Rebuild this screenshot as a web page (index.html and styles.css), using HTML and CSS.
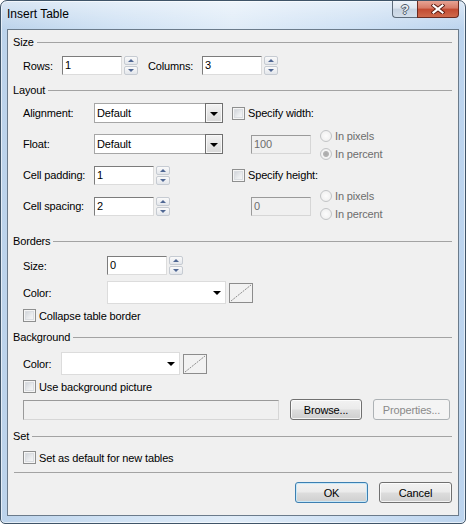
FILE: index.html
```html
<!DOCTYPE html>
<html>
<head>
<meta charset="utf-8">
<title>Insert Table</title>
<link rel="stylesheet" href="styles.css">
</head>
<body>
<div class="window">
  <div class="titlebar">
    <span class="title">Insert Table</span>
    <div class="caption">
      <div class="cap-btn cap-help"><span>?</span></div>
      <div class="cap-btn cap-close">
        <svg width="14" height="10" viewBox="0 0 14 10"><path d="M2.5 1.5 L11.5 8.5 M11.5 1.5 L2.5 8.5" stroke="#5a1a10" stroke-width="4" stroke-linecap="square" fill="none"/><path d="M2.5 1.5 L11.5 8.5 M11.5 1.5 L2.5 8.5" stroke="#ffffff" stroke-width="2.2" stroke-linecap="square" fill="none"/></svg>
      </div>
    </div>
  </div>
  <div class="client">
    <div class="ghead"><span>Size</span></div>
    <div class="row row-size">
      <span class="lbl w-rows">Rows:</span>
      <div class="spin"><div class="tb">1</div><div class="spinbtns"><span class="sb"><i class="up"></i></span><span class="sb"><i class="down"></i></span></div></div>
      <span class="lbl w-cols">Columns:</span>
      <div class="spin"><div class="tb">3</div><div class="spinbtns"><span class="sb"><i class="up"></i></span><span class="sb"><i class="down"></i></span></div></div>
    </div>

    <div class="ghead g-layout"><span>Layout</span></div>
    <div class="lgrid">
      <span class="lbl">Alignment:</span>
      <div class="combo"><span>Default</span><span class="dd"><i></i></span></div>
      <div class="rc"><span class="cb"></span><span class="cbtext">Specify width:</span></div>

      <span class="lbl">Float:</span>
      <div class="combo"><span>Default</span><span class="dd"><i></i></span></div>
      <div class="rc rc-sub"><div class="tb dis">100</div>
        <div class="radios"><div class="ropt"><span class="rd"></span><span>In pixels</span></div><div class="ropt"><span class="rd on"></span><span>In percent</span></div></div>
      </div>

      <span class="lbl">Cell padding:</span>
      <div class="spin"><div class="tb">1</div><div class="spinbtns"><span class="sb"><i class="up"></i></span><span class="sb"><i class="down"></i></span></div></div>
      <div class="rc"><span class="cb"></span><span class="cbtext">Specify height:</span></div>

      <span class="lbl">Cell spacing:</span>
      <div class="spin"><div class="tb">2</div><div class="spinbtns"><span class="sb"><i class="up"></i></span><span class="sb"><i class="down"></i></span></div></div>
      <div class="rc rc-sub rc-low"><div class="tb dis">0</div>
        <div class="radios"><div class="ropt"><span class="rd"></span><span>In pixels</span></div><div class="ropt"><span class="rd"></span><span>In percent</span></div></div>
      </div>
    </div>

    <div class="ghead g-borders"><span>Borders</span></div>
    <div class="row row-bsize">
      <span class="lbl w-b">Size:</span>
      <div class="spin"><div class="tb">0</div><div class="spinbtns"><span class="sb"><i class="up"></i></span><span class="sb"><i class="down"></i></span></div></div>
    </div>
    <div class="row row-bcolor">
      <span class="lbl w-b">Color:</span>
      <div class="ccombo"><i></i></div>
      <span class="swatch"><svg width="22" height="18" viewBox="0 0 22 18"><line x1="1" y1="17" x2="21" y2="1" stroke="#8c8c8c" stroke-width="1" stroke-dasharray="2 1"/></svg></span>
    </div>
    <div class="row row-collapse">
      <span class="cb"></span><span class="cbtext">Collapse table border</span>
    </div>

    <div class="ghead g-bg"><span>Background</span></div>
    <div class="row row-bgcolor">
      <span class="lbl w-bg">Color:</span>
      <div class="ccombo"><i></i></div>
      <span class="swatch"><svg width="22" height="18" viewBox="0 0 22 18"><line x1="1" y1="17" x2="21" y2="1" stroke="#8c8c8c" stroke-width="1" stroke-dasharray="2 1"/></svg></span>
    </div>
    <div class="row row-usebg">
      <span class="cb"></span><span class="cbtext">Use background picture</span>
    </div>
    <div class="row row-path">
      <div class="tb dis path"></div>
      <div class="btn b-browse">Browse...</div>
      <div class="btn dis b-props">Properties...</div>
    </div>

    <div class="ghead g-set"><span>Set</span></div>
    <div class="row row-setdef">
      <span class="cb"></span><span class="cbtext">Set as default for new tables</span>
    </div>
    <div class="sep"></div>
    <div class="actions">
      <div class="btn default">OK</div>
      <div class="btn">Cancel</div>
    </div>
  </div>
</div>
</body>
</html>
```

FILE: styles.css
```css
* { box-sizing: border-box; }
html, body { margin: 0; padding: 0; }
body {
  width: 466px;
  height: 524px;
  font-family: "Liberation Sans", Arial, sans-serif;
  font-size: 11px;
  letter-spacing: -0.15px;
  color: #000;
  background: #ffffff;
  overflow: hidden;
}

.window {
  width: 466px;
  height: 524px;
  border: 1px solid #3f5468;
  border-radius: 7px 7px 5px 5px;
  padding: 0 6px 7px 6px;
  display: flex;
  flex-direction: column;
  background:
    linear-gradient(to bottom, rgba(255,255,255,0.45), rgba(255,255,255,0) 28px),
    linear-gradient(to right, #bcd3eb 0%, #d0e2f4 25%, #e0ecf8 50%, #cfe1f4 75%, #bcd4ee 100%);
  box-shadow: inset 0 0 0 1px rgba(255,255,255,0.6);
}

/* title bar */
.titlebar {
  height: 28px;
  display: flex;
  align-items: flex-start;
  flex: none;
}
.title {
  font-size: 12px;
  letter-spacing: 0;
  line-height: 14px;
  margin-top: 6px;
  color: #000;
}
.caption {
  margin-left: auto;
  display: flex;
}
.cap-btn {
  height: 17px;
  display: flex;
  align-items: center;
  justify-content: center;
  border: 1px solid #5d6b7a;
  border-top: none;
}
.cap-help {
  width: 25px;
  border-radius: 0 0 0 4px;
  border-right: none;
  background: linear-gradient(to bottom, #eef3f9 0%, #dde6f0 45%, #c6d3e2 50%, #d3deea 100%);
}
.cap-help span {
  font-weight: bold;
  font-size: 13px;
  line-height: 13px;
  color: #eef2f6;
  letter-spacing: 0;
  text-shadow: 1px 0 #4e5a68, -1px 0 #4e5a68, 0 1px #4e5a68, 0 -1px #4e5a68;
}
.cap-close {
  width: 42px;
  border-color: #6b2b20;
  border-radius: 0 0 4px 0;
  background: linear-gradient(to bottom, #e7a394 0%, #d77a66 45%, #c24a31 50%, #cf6a4c 100%);
}

/* client area */
.client {
  flex: 1;
  border: 1px solid #6b7b8b;
  background: #f0f0f0;
  padding: 5px 6px 0 5px;
  display: flex;
  flex-direction: column;
}

.ghead {
  height: 14px;
  line-height: 14px;
  display: flex;
  align-items: center;
  flex: none;
}
.ghead::after {
  content: "";
  flex: 1;
  height: 1px;
  margin-left: 3px;
  margin-top: 1px;
  background: #a3a3a3;
}
.g-layout { margin-top: 8px; }
.g-borders { margin-top: 18px; }
.g-bg { margin-top: 8px; }
.g-set { margin-top: 9px; }

.row {
  display: flex;
  align-items: center;
  padding-left: 10px;
  flex: none;
}
.lbl { flex: none; white-space: nowrap; }
.w-rows { width: 39px; }
.w-cols { width: 54px; margin-left: 10px; }
.w-b { width: 84px; }
.w-bg { width: 38px; }

.row-size { margin-top: 7px; }
.row-bsize { margin-top: 8px; }
.row-bcolor { margin-top: 6px; }
.row-collapse { margin-top: 5px; height: 13px; }
.row-bgcolor { margin-top: 8px; }
.row-usebg { margin-top: 5px; height: 13px; }
.row-path { margin-top: 6px; }
.row-setdef { margin-top: 8px; height: 13px; }

/* text box */
.tb {
  width: 60px;
  height: 19px;
  background: #fff;
  border: 1px solid;
  border-color: #7c7c7c #dcdcdc #dcdcdc #7c7c7c;
  padding-left: 2px;
  line-height: 17px;
  flex: none;
}
.tb.dis {
  background: #f0f0f0;
  color: #6d6d6d;
  border-color: #9a9a9a #d6d6d6 #d6d6d6 #9a9a9a;
}
.tb.path { width: 256px; height: 20px; }

/* spinner */
.spin {
  display: flex;
  gap: 2px;
  align-items: center;
}
.spinbtns {
  width: 14px;
  height: 19px;
  display: flex;
  flex-direction: column;
  gap: 1px;
}
.sb {
  flex: 1;
  border: 1px solid #c6cbd2;
  border-radius: 2px;
  background: linear-gradient(to bottom, #fafafa, #e3e6eb);
  display: flex;
  align-items: center;
  justify-content: center;
}
.sb i {
  width: 0;
  height: 0;
  border-left: 3px solid transparent;
  border-right: 3px solid transparent;
}
.sb i.up { border-bottom: 3px solid #4f6793; }
.sb i.down { border-top: 3px solid #4f6793; }

/* layout grid */
.lgrid {
  display: grid;
  grid-template-columns: 71px 129px 1fr;
  grid-template-rows: repeat(4, 20px);
  row-gap: 11px;
  align-items: center;
  padding-left: 10px;
  margin-top: 6px;
  flex: none;
}
.rc {
  height: 20px;
  display: flex;
  align-items: center;
  padding-left: 9px;
}
.rc-sub { padding-left: 28px; }
.radios {
  display: flex;
  flex-direction: column;
  gap: 6px;
  margin-left: 9px;
  padding-top: 2px;
}
.rc-low .radios { padding-top: 0; padding-bottom: 2px; }
.ropt {
  display: flex;
  align-items: center;
  gap: 3px;
  height: 12px;
  color: #6d6d6d;
  white-space: nowrap;
}
.rd {
  width: 12px;
  height: 12px;
  border-radius: 50%;
  border: 1px solid #c2c4c6;
  background: radial-gradient(circle at 50% 50%, #fcfcfc 0%, #ececec 100%);
  flex: none;
}
.rd.on {
  background: radial-gradient(circle at 50% 50%, #a9a9a9 0, #b4b4b4 2.5px, #f4f4f4 3.5px, #e8e8e8 100%);
}

/* combo */
.combo {
  width: 129px;
  height: 20px;
  border: 1px solid #a6a6a6;
  background: #fff;
  display: flex;
  align-items: center;
  padding-left: 2px;
}
.dd {
  margin-left: auto;
  margin-right: -1px;
  width: 18px;
  height: 20px;
  border: 1px solid #6f6f6f;
  box-shadow: inset 0 0 0 1px #f8f8f8;
  background: linear-gradient(to bottom, #f3f3f3, #d8d8d8);
  display: flex;
  align-items: center;
  justify-content: center;
  padding-top: 2px;
}
.dd i {
  width: 0;
  height: 0;
  border-left: 4px solid transparent;
  border-right: 4px solid transparent;
  border-top: 4px solid #000;
}

.ccombo {
  width: 119px;
  height: 23px;
  border: 1px solid #dcdcdc;
  background: #fff;
  display: flex;
  align-items: center;
  justify-content: flex-end;
  padding-right: 4px;
}
.ccombo i {
  width: 0;
  height: 0;
  border-left: 4px solid transparent;
  border-right: 4px solid transparent;
  border-top: 4px solid #000;
  margin-top: 1px;
}
.swatch {
  width: 24px;
  height: 20px;
  margin-left: 3px;
  border: 1px solid #8c8c8c;
  background: #f2f2f2;
  display: flex;
}

/* checkbox */
.cb {
  width: 13px;
  height: 13px;
  flex: none;
  border: 1px solid #8e8f8f;
  background: linear-gradient(135deg, #c8ccd2 0%, #eceef0 60%, #fafafa 100%);
  box-shadow: inset 0 0 0 1px #f5f5f5, inset 0 0 0 2px #dadde1;
}
.cbtext {
  margin-left: 3px;
  white-space: nowrap;
}

/* buttons */
.btn {
  height: 21px;
  border: 1px solid #707070;
  border-radius: 3px;
  background: linear-gradient(to bottom, #f2f2f2 0%, #ebebeb 48%, #dddddd 52%, #cfcfcf 100%);
  box-shadow: inset 0 0 0 1px rgba(255,255,255,0.75);
  display: flex;
  align-items: center;
  justify-content: center;
  white-space: nowrap;
  flex: none;
}
.btn.dis {
  border-color: #adb2b5;
  background: #f4f4f4;
  color: #8a8a8a;
  box-shadow: none;
}
.b-browse { width: 72px; margin-left: 11px; }
.b-props { width: 77px; margin-left: 11px; }

.sep {
  height: 1px;
  background: #a3a3a3;
  margin: 8px 0 0 1px;
  flex: none;
}
.actions {
  display: flex;
  justify-content: flex-end;
  gap: 11px;
  margin-top: 9px;
}
.actions .btn { width: 73px; }
.btn.default {
  border-color: #3c7fb1;
  box-shadow: inset 0 0 0 1px #c8e8f8;
}
```
